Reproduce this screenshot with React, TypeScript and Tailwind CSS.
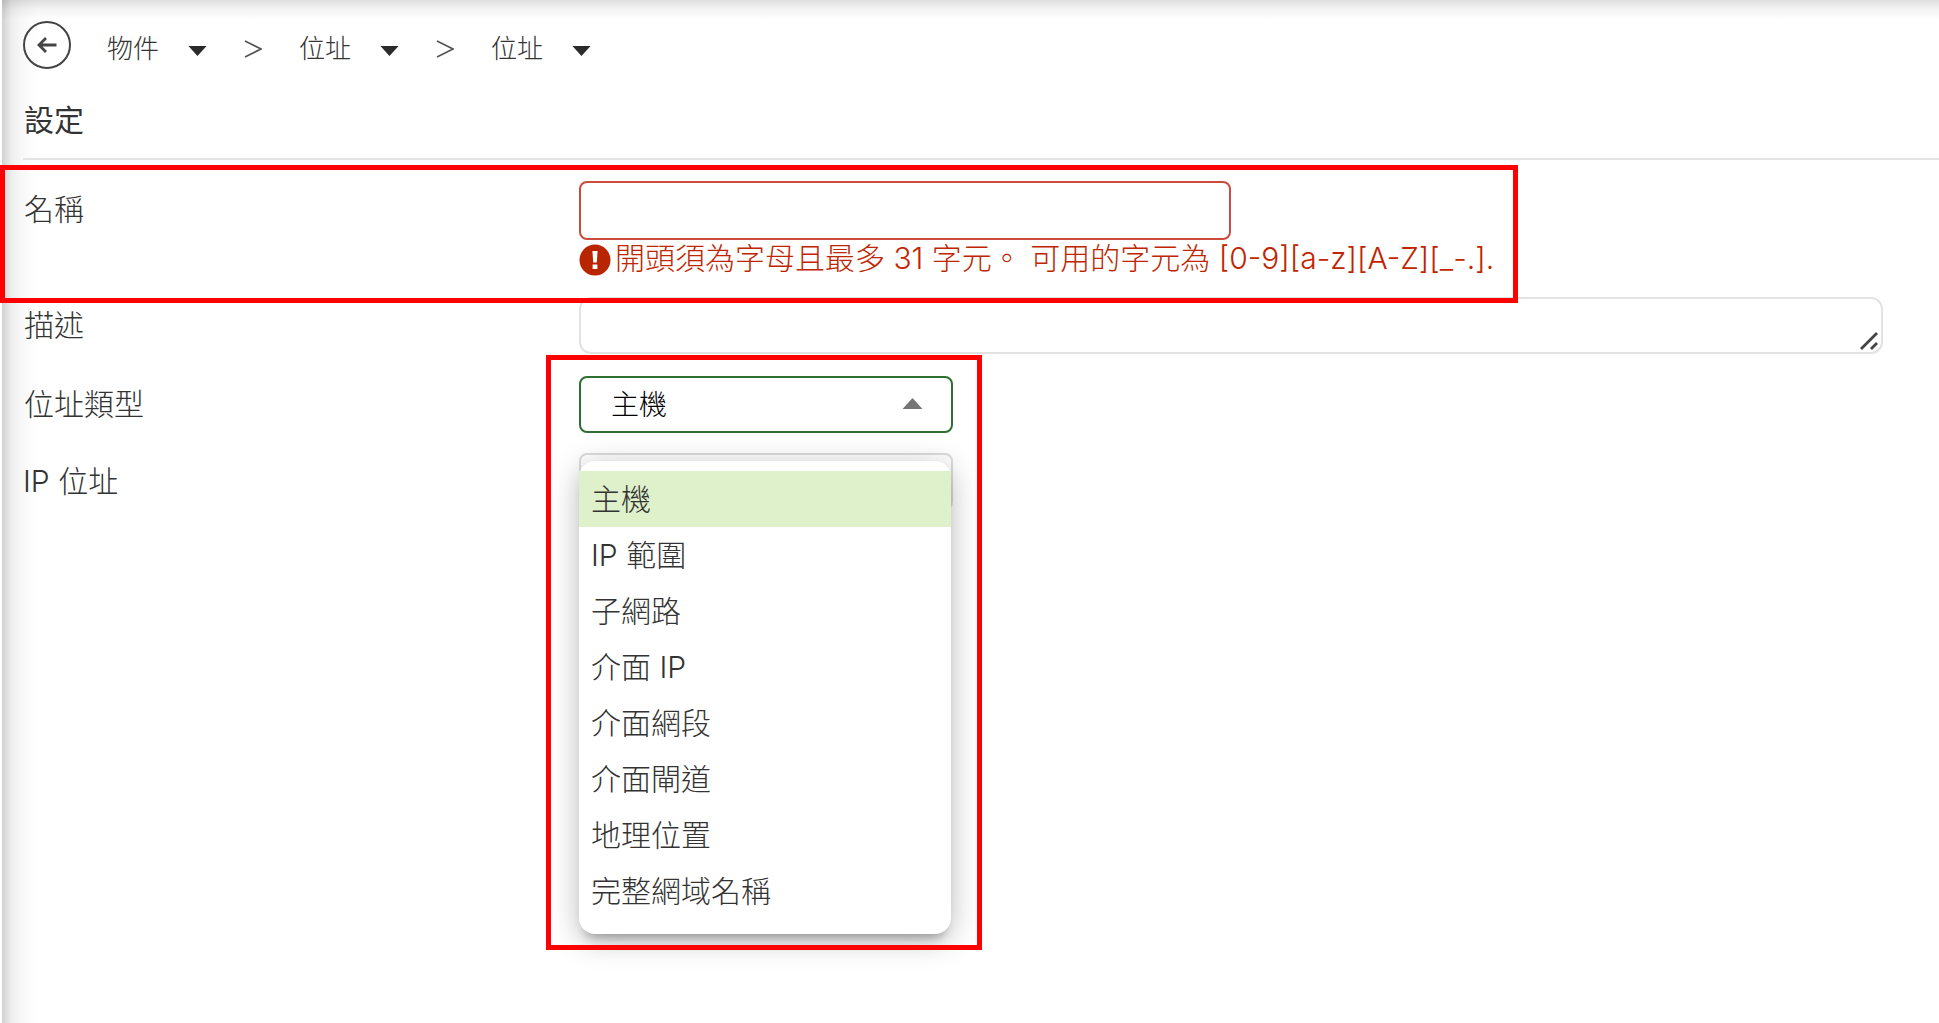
import { useState } from 'react';

const addressTypes = ['主機', 'IP 範圍', '子網路', '介面 IP', '介面網段', '介面閘道', '地理位置', '完整網域名稱'];

const crumbs = ['物件', '位址', '位址'];

const Caret = ({ up = false, className = '' }: { up?: boolean; className?: string }) => (
  <svg viewBox="0 0 20 11" className={className} fill="currentColor" aria-hidden="true">
    <path d={up ? 'M0 11L10 0L20 11Z' : 'M0 0H20L10 11Z'} />
  </svg>
);

const Breadcrumb = () => (
  <nav className="flex items-center h-12 text-[26px] leading-8 text-[#333]">
    <button aria-label="返回" className="w-12 h-12 text-[#444]">
      <svg viewBox="0 0 48 48" className="w-12 h-12" fill="none" stroke="currentColor">
        <circle cx="24" cy="24" r="23" strokeWidth="2" />
        <path d="M33.5 24H16.5M23 17L16 24L23 31" strokeWidth="2.8" />
      </svg>
    </button>
    <ol className="flex items-center pl-9 pt-2">
      {crumbs.map((name, i) => (
        <li key={i} className="flex items-center">
          {i > 0 && (
            <svg viewBox="0 0 18 18" className="w-[18px] h-[18px] mx-[37px]" fill="none" stroke="#555" strokeWidth="1.6">
              <path d="M1 1L17 9L1 17" />
            </svg>
          )}
          <button className="flex items-center gap-[29px]">
            {name}
            <Caret className="w-[19px] h-[10px] mt-1 text-[#2b2b2b]" />
          </button>
        </li>
      ))}
    </ol>
  </nav>
);

const App = () => {
  const [type, setType] = useState('主機');
  const [open, setOpen] = useState(true);

  return (
    <div className="min-h-screen bg-white pl-[2px] font-[Inter,'Noto_Sans_CJK_TC',sans-serif] font-light">
      <main className="min-h-screen pt-[21px] pl-[21px] bg-[linear-gradient(to_right,#0000002e,#00000010_10px,#00000007_20px,transparent_36px),linear-gradient(to_bottom,#00000020,#0000000c_9px,transparent_20px)]">
        <Breadcrumb />

        <h1 className="mt-7 pl-px pb-[15px] text-[30px] leading-[46px] font-normal text-[#333] border-b-2 border-[#e4e4e4]">設定</h1>

        <form className="mt-[21px] pr-14 text-[30px] leading-9 text-[#333]">
          {/* Nombre, con el mensaje de error */}
          <div className="relative flex h-[116px]">
            <label htmlFor="name" className="w-[556px] shrink-0 pl-px pt-[10px]">名稱</label>
            <div className="flex-1">
              <input id="name" aria-describedby="name-error" className="block w-1/2 h-[59px] px-4 bg-white border-2 border-[#cc4b3c] rounded-lg outline-none" />
              <p id="name-error" className="flex items-center gap-1 text-[#bf2600] whitespace-nowrap">
                <svg viewBox="0 0 32 32" className="w-8 h-8 mt-1 shrink-0" aria-hidden="true">
                  <circle cx="16" cy="16" r="15.5" fill="#b92500" />
                  <path d="M13.4 7H18.6L17.8 18.5H14.2Z" fill="#fff" />
                  <rect x="13.6" y="20.5" width="4.8" height="4.5" fill="#fff" />
                </svg>
                開頭須為字母且最多 31 字元。 可用的字元為 [0-9][a-z][A-Z][_-.].
              </p>
            </div>
            <div className="absolute -top-4 -left-[23px] w-[1518px] h-[138px] border-5 border-[#ff0000] pointer-events-none z-10" />
          </div>

          <div className="flex">
            <label htmlFor="description" className="w-[556px] shrink-0 pl-px pt-[10px]">描述</label>
            <div className="relative flex-1">
              <textarea id="description" className="block w-full h-[57px] px-4 py-2 bg-white border-2 border-[#e2e2e2] rounded-xl resize-none outline-none" />
              <svg viewBox="0 0 18 18" className="absolute right-[5px] bottom-[4px] w-[18px] h-[18px]" stroke="#444" strokeWidth="2.8" fill="none" aria-hidden="true">
                <path d="M1 17L17 1M11 17L17 11" />
              </svg>
            </div>
          </div>

          <div className="relative flex mt-[22px]">
            <label htmlFor="type" className="w-[556px] shrink-0 pl-px pt-[10px]">位址類型</label>
            <div className="relative w-[374px]">
              <select
                id="type"
                value={type}
                onChange={(e) => setType(e.target.value)}
                onMouseDown={(e) => {
                  e.preventDefault();
                  setOpen(!open);
                }}
                className="block w-full h-[57px] pl-[30px] text-[28px] text-black bg-white border-2 border-[#2f6f31] rounded-lg appearance-none outline-none"
              >
                {addressTypes.map((item) => (
                  <option key={item}>{item}</option>
                ))}
              </select>
              <Caret up className="absolute right-[30px] top-[22px] w-[21px] h-[11px] text-[#757575] pointer-events-none" />

              {open && (
                <ul role="listbox" className="absolute left-0 top-[85px] w-[372px] pt-[10px] pb-[15px] bg-white rounded-2xl shadow-[0_10px_10px_-6px_rgba(0,0,0,0.25),0_6px_30px_rgba(0,0,0,0.28)] z-10">
                  {addressTypes.map((item) => (
                    <li
                      key={item}
                      role="option"
                      aria-selected={item === type}
                      onClick={() => {
                        setType(item);
                        setOpen(false);
                      }}
                      className="flex items-center h-14 px-3 cursor-pointer aria-selected:bg-[#dff1cb]"
                    >
                      {item}
                    </li>
                  ))}
                </ul>
              )}
            </div>
            <div className="absolute -top-[21px] left-[523px] w-[436px] h-[595px] border-5 border-[#ff0000] pointer-events-none z-20" />
          </div>

          <div className="flex mt-5">
            <label htmlFor="ip" className="w-[556px] shrink-0 pt-[10px]">IP 位址</label>
            <input id="ip" className="w-[374px] h-[57px] px-4 bg-white border-2 border-[#dcdcdc] rounded-lg outline-none" />
          </div>
        </form>
      </main>
    </div>
  );
};

export default App;
